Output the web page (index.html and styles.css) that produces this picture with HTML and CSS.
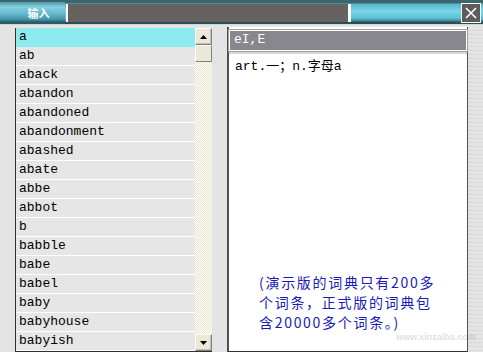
FILE: index.html
```html
<!DOCTYPE html>
<html>
<head>
<meta charset="utf-8">
<link rel="stylesheet" href="styles.css">
</head>
<body>
<div class="app">
  <div class="topbar">
    <div class="tab">输入</div>
    <div class="input"></div>
    <div class="fill"></div>
    <div class="close">
      <svg width="14" height="14" viewBox="0 0 14 14"><path d="M2 2 L12 12 M12 2 L2 12" stroke="#fff" stroke-width="1.6"/></svg>
    </div>
  </div>
  <div class="main">
    <div class="gutter"></div>
    <div class="listbox">
      <ul class="list">
        <li class="sel">a</li>
        <li>ab</li>
        <li>aback</li>
        <li>abandon</li>
        <li>abandoned</li>
        <li>abandonment</li>
        <li>abashed</li>
        <li>abate</li>
        <li>abbe</li>
        <li>abbot</li>
        <li>b</li>
        <li>babble</li>
        <li>babe</li>
        <li>babel</li>
        <li>baby</li>
        <li>babyhouse</li>
        <li>babyish</li>
      </ul>
      <div class="scroll">
        <div class="sbtn"><svg width="7" height="4" viewBox="0 0 7 4"><path d="M0 4 L3.5 0 L7 4 Z" fill="#000"/></svg></div>
        <div class="thumb"></div>
        <div class="track"></div>
        <div class="sbtn"><svg width="7" height="4" viewBox="0 0 7 4"><path d="M0 0 L3.5 4 L7 0 Z" fill="#000"/></svg></div>
      </div>
    </div>
    <div class="gap"></div>
    <div class="panel">
      <div class="phon">eI,E</div>
      <div class="content">
        <div class="def">art.一；n.字母a</div>
        <div class="note">
          <span>(演示版的词典只有200多</span>
          <span>个词条，正式版的词典包</span>
          <span>含20000多个词条。)</span>
        </div>
      </div>
    </div>
    <div class="edge"></div>
  </div>
  <div class="watermark">www.xinzaiba.com</div>
</div>
</body>
</html>
```
FILE: styles.css
```css
* { box-sizing: border-box; margin: 0; padding: 0; }
html, body { width: 483px; height: 352px; overflow: hidden; }
body { background: #e4e4e4; font-family: "Liberation Mono", monospace; }
.app { position: relative; width: 483px; height: 352px; display: flex; flex-direction: column; }

.topbar {
  height: 25px; display: flex; align-items: flex-start;
  background: linear-gradient(#3c666c 0, #3c666c 3px, #56b4c8 4px, #7cd6e8 11px, #5cc2d8 18px, #3a8898 21px, #2a4e54 22px, #2a4e54 24px, #cfd6d6 24px);
}
.tab {
  width: 65px; height: 22px; margin-top: 2px;
  display: flex; align-items: center; justify-content: center;
  color: #fff; font: bold 11px "Noto Sans CJK SC", sans-serif;
  background: linear-gradient(#4c98a8 0, #86d0e0 5px, #64b8cc 12px, #3e8ea2 18px, #2a5a64 20px);
  padding-left: 12px;
}
.input {
  width: 285px; height: 18px; margin-top: 4px;
  background: #666261;
  border-left: 2px solid #fff; border-right: 3px solid #fff;
  margin-left: 1px;
}
.fill { flex: 1; }
.close {
  width: 20px; height: 20px; margin: 3px 2px 0 0;
  background: #5c5c5c; border: 1px solid #fff;
  display: flex; align-items: center; justify-content: center;
}

.main { flex: 1; display: flex; padding-top: 2px; }
.gutter { width: 15px; }
.listbox {
  display: flex; border-left: 1px solid #303030; border-bottom: 1px solid #303030;
  height: 324px; margin-top: 1px;
}
.list { list-style: none; width: 179px; overflow: hidden; }
.list li {
  height: 19px; line-height: 18px; padding-left: 3px;
  font-size: 13px; color: #000;
  background: #e6e6e6; border-bottom: 1px solid #fff;
}
.list li.sel { background: #8ceced; border-bottom-color: #8ceced; }

.scroll { width: 17px; display: flex; flex-direction: column; }
.sbtn, .thumb {
  width: 17px; height: 17px; background: #ece8d8;
  border: 1px solid; border-color: #fff #808080 #808080 #fff;
  display: flex; align-items: center; justify-content: center;
}
.sbtn { box-shadow: inset -1px -1px 0 #c0c0c0; }
.track {
  flex: 1;
  background: repeating-conic-gradient(#eae6d2 0 25%, #fdfdf8 0 50%) 0 0 / 2px 2px;
}
.gap { width: 15px; }
.panel {
  width: 241px; border-left: 2px solid #505050; border-right: 1px solid #505050;
  border-bottom: 1px solid #303030;
  height: 325px; display: flex; flex-direction: column; background: #fff;
}
.phon {
  height: 21px; margin: 3px 0 0 0;
  background: #87878d; color: #fff; font-size: 13px;
  border: 1px solid #fff; outline: 1px solid #a0a0a0;
  padding-left: 4px; line-height: 18px;
  box-shadow: 0 3px 0 #d8d8d8;
}
.content { flex: 1; position: relative; padding: 8px 0 0 6px; }
.def { font-size: 13px; color: #000; line-height: 16px; font-family: "Liberation Mono", "Noto Sans CJK SC", monospace; }
.note {
  margin: 197px 0 0 24px;
  display: flex; flex-direction: column;
  color: #1a1ab8; font-size: 14px; line-height: 20px;
  font-family: "Noto Sans CJK SC", sans-serif;
  letter-spacing: 1.7px;
}
.edge {
  flex: 1;
  background: repeating-linear-gradient(#e4e4e4 0 3px, #d8d8d8 3px 4px);
}
.watermark {
  position: absolute; left: 396px; top: 332px;
  font: bold 9px "Liberation Sans", sans-serif; color: rgba(160,160,160,0.35);
}
```
